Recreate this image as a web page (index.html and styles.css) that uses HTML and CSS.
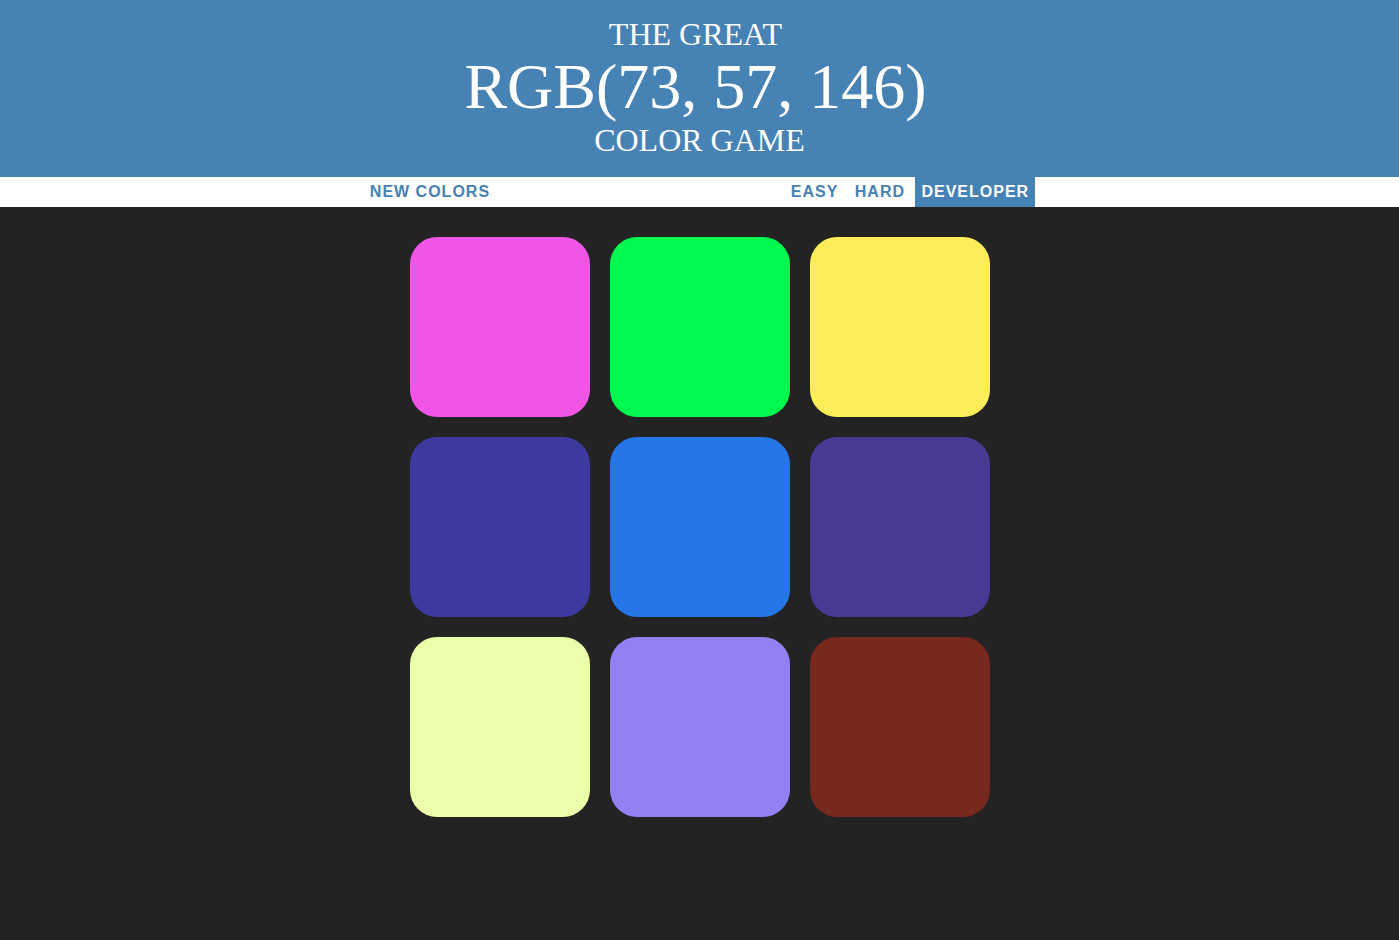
FILE: index.html
```html
<!DOCTYPE html>
<html>
<head>
<meta charset="utf-8">
<title>Color Game</title>
<link rel="stylesheet" href="styles.css">
</head>
<body>
<h1 class="title">The Great&nbsp;<br><span class="color-display">RGB(73, 57, 146)</span>&nbsp;<br>Color Game</h1>
<div class="stripe">
  <button class="btn">New Colors</button>
  <span class="message"></span>
  <button class="btn">Easy</button>
  <button class="btn">Hard</button>
  <button class="btn selected">Developer</button>
</div>
<div class="container">
  <div class="square sq1"></div>
  <div class="square sq2"></div>
  <div class="square sq3"></div>
  <div class="square sq4"></div>
  <div class="square sq5"></div>
  <div class="square sq6"></div>
  <div class="square sq7"></div>
  <div class="square sq8"></div>
  <div class="square sq9"></div>
</div>
</body>
</html>
```
FILE: styles.css
```css
body {
  margin: 0;
  background: #232323;
  font-family: "Liberation Sans", Arial, sans-serif;
}

.title {
  margin: 0;
  padding: 17px 0 19px;
  background: #4682b4;
  color: #fff;
  text-align: center;
  text-transform: uppercase;
  font-family: "Liberation Serif", "Times New Roman", serif;
  font-weight: normal;
  font-size: 32px;
  line-height: 1.1;
}

.color-display {
  font-size: 200%;
}

.stripe {
  background: #fff;
  height: 30px;
  text-align: center;
  font-size: 16px;
}

.message {
  display: inline-block;
  width: 20%;
}

.btn {
  border: none;
  background: none;
  margin: 0;
  padding: 1px 6px;
  height: 100%;
  vertical-align: top;
  text-transform: uppercase;
  font-family: "Liberation Sans", Arial, sans-serif;
  font-weight: 700;
  font-size: inherit;
  letter-spacing: 1px;
  color: #4682b4;
  outline: none;
}

.btn.selected {
  background: #4682b4;
  color: #fff;
}

.container {
  width: 600px;
  margin: 20px auto 0;
  display: flex;
  flex-wrap: wrap;
}

.square {
  width: 180px;
  height: 180px;
  margin: 10px;
  border-radius: 27px;
}

.sq1 { background: rgb(240, 85, 230); }
.sq2 { background: rgb(0, 249, 78); }
.sq3 { background: rgb(253, 237, 88); }
.sq4 { background: rgb(61, 58, 159); }
.sq5 { background: rgb(39, 118, 232); }
.sq6 { background: rgb(73, 57, 146); }
.sq7 { background: rgb(235, 254, 169); }
.sq8 { background: rgb(147, 128, 242); }
.sq9 { background: rgb(118, 41, 28); }
```
